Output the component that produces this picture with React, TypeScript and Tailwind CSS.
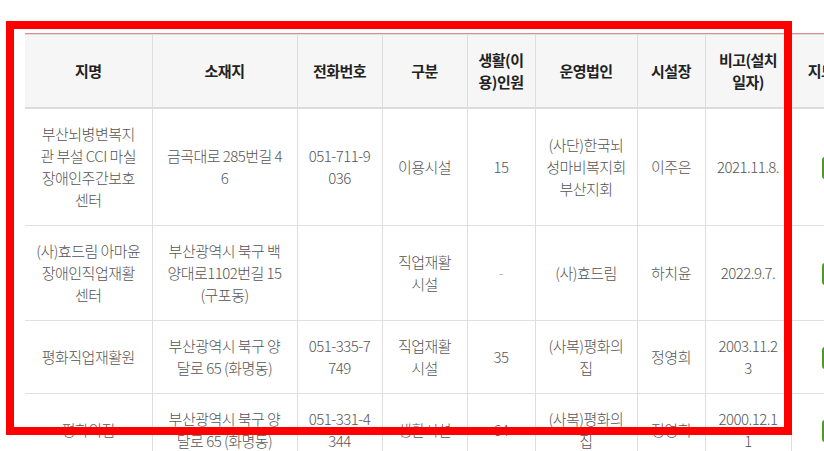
const headers = [
  { label: "지명", w: "w-[127px]" },
  { label: "소재지", w: "w-[145px]" },
  { label: "전화번호", w: "w-[85px]" },
  { label: "구분", w: "w-[85px]" },
  { label: "생활(이\n용)인원", w: "w-[68px]" },
  { label: "운영법인", w: "w-[102px]" },
  { label: "시설장", w: "w-[68px]" },
  { label: "비고(설치\n일자)", w: "w-[86px]" },
  { label: "지도보기", w: "w-[86px]" },
];

const rows = [
  {
    name: "부산뇌병변복지\n관 부설 CCI 마실\n장애인주간보호\n센터",
    addr: "금곡대로 285번길 4\n6",
    tel: "051-711-9\n036",
    kind: "이용시설",
    count: "15",
    corp: "(사단)한국뇌\n성마비복지회\n부산지회",
    head: "이주은",
    note: "2021.11.8.",
  },
  {
    name: "(사)효드림 아마윤\n장애인직업재활\n센터",
    addr: "부산광역시 북구 백\n양대로1102번길 15\n(구포동)",
    tel: "",
    kind: "직업재활\n시설",
    count: "-",
    corp: "(사)효드림",
    head: "하치윤",
    note: "2022.9.7.",
  },
  {
    name: "평화직업재활원",
    addr: "부산광역시 북구 양\n달로 65 (화명동)",
    tel: "051-335-7\n749",
    kind: "직업재활\n시설",
    count: "35",
    corp: "(사복)평화의\n집",
    head: "정영희",
    note: "2003.11.2\n3",
  },
  {
    name: "평화의집",
    addr: "부산광역시 북구 양\n달로 65 (화명동)",
    tel: "051-331-4\n344",
    kind: "생활시설",
    count: "64",
    corp: "(사복)평화의\n집",
    head: "정영희",
    note: "2000.12.1\n1",
  },
];

export default function App() {
  return (
    <div className="relative w-screen h-screen overflow-hidden bg-white font-['Noto_Sans_CJK_KR','Noto_Sans',sans-serif]">
      <div className="pl-[25px] pt-[33px]">
        <div className="w-max border-t border-[#e08a8a]">
          <table className="table-fixed border-collapse text-[15px] leading-[22px] tracking-[-0.035em]">
            <thead>
              <tr className="bg-[#f6f6f6]">
                {headers.map((h, i) => (
                  <th
                    key={h.label}
                    className={`${h.w} px-[6px] py-[14px] whitespace-pre-line text-center align-middle font-bold text-[#222] border-t border-b-2 border-t-[#dedede] border-b-[#dcdcdc] ${i > 0 ? "border-l border-l-[#dedede]" : ""}`}
                  >
                    {h.label}
                  </th>
                ))}
              </tr>
            </thead>
            <tbody>
              {rows.map((r) => (
                <tr key={r.name} className="border-b border-[#e0e0e0]">
                  {[r.name, r.addr, r.tel, r.kind, r.count, r.corp, r.head, r.note].map((v, i) => (
                    <td
                      key={i}
                      className={`px-[4px] py-[14px] whitespace-pre-line text-center align-middle font-light ${v === "-" ? "text-[#aaa]" : "text-[#555]"} ${i > 0 ? "border-l border-[#dedede]" : ""}`}
                    >
                      {v}
                    </td>
                  ))}
                  <td className="px-[4px] py-[14px] text-center align-middle border-l border-[#dedede]">
                    <span className="inline-block w-[24px] h-[22px] border-2 border-[#4c9a2a] rounded-[3px] align-middle" />
                  </td>
                </tr>
              ))}
            </tbody>
          </table>
        </div>
      </div>
      <div className="pointer-events-none absolute left-[6px] top-[21px] w-[786px] h-[414px] border-8 border-[#ff0000]" />
    </div>
  );
}
